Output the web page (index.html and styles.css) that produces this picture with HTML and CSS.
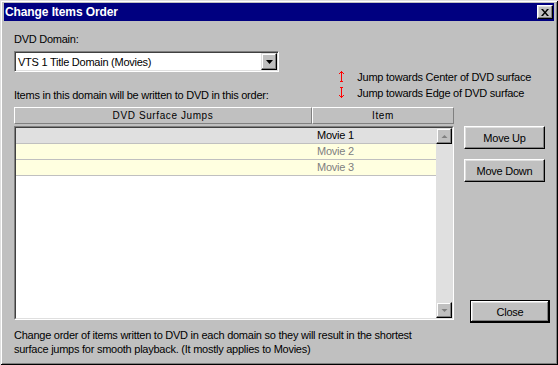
FILE: index.html
```html
<!DOCTYPE html>
<html lang="en">
<head>
  <meta charset="UTF-8">
  <title>Change Items Order</title>
  <link rel="stylesheet" href="styles.css">
</head>
<body>
  <div class="window">
    <div class="titlebar">
      <span class="title">Change Items Order</span>
      <button class="tb-close" aria-label="Close">
        <svg width="8" height="7" viewBox="0 0 8 7"><path d="M0 0h2l2 2.5L6 0h2L5 3.5 8 7H6L4 4.5 2 7H0l3-3.5z" fill="#000"/></svg>
      </button>
    </div>

    <div class="client">
      <div class="top">
        <div class="domain">
          <label class="lbl">DVD Domain:</label>
          <div class="combo">
            <span class="combo-text">VTS 1 Title Domain (Movies)</span>
            <span class="combo-btn">
              <svg width="7" height="4" viewBox="0 0 7 4"><path d="M0 0h7L3.5 4z" fill="#000"/></svg>
            </span>
          </div>
          <p class="hint">Items in this domain will be written to DVD in this order:</p>
        </div>

        <ul class="legend">
          <li>
            <svg class="arrow arrow-up" width="7" height="12" viewBox="0 0 7 12" shape-rendering="crispEdges"><path d="M1 3h1v1H1zM2 2h1v1H2zM3 1h1v10H3zM4 2h1v1H4zM5 3h1v1H5zM2 11h3v1H2z" fill="#ff0000"/></svg>
            <span>Jump towards Center of DVD surface</span>
          </li>
          <li>
            <svg class="arrow" width="7" height="12" viewBox="0 0 7 12" shape-rendering="crispEdges"><path d="M2 0h3v1H2zM3 1h1v10H3zM1 8h1v1H1zM2 9h1v1H2zM4 9h1v1H4zM5 8h1v1H5z" fill="#ff0000"/></svg>
            <span>Jump towards Edge of DVD surface</span>
          </li>
        </ul>
      </div>

      <div class="main">
        <div class="listview">
          <div class="header">
            <div class="col col-jumps">DVD Surface Jumps</div>
            <div class="col col-item">Item</div>
          </div>
          <div class="list">
            <div class="list-inner">
              <div class="rows">
                <div class="row selected"><span class="cell-jump"></span><span class="cell-item">Movie 1</span></div>
                <div class="row"><span class="cell-jump"></span><span class="cell-item">Movie 2</span></div>
                <div class="row"><span class="cell-jump"></span><span class="cell-item">Movie 3</span></div>
              </div>
              <div class="scrollbar">
                <span class="sb-btn">
                  <svg width="7" height="5" viewBox="0 0 7 5"><path d="M3.5 1L6.5 4H0.5z" fill="#808080"/></svg>
                </span>
                <span class="sb-btn">
                  <svg width="7" height="5" viewBox="0 0 7 5"><path d="M0.5 1H6.5L3.5 4z" fill="#808080"/></svg>
                </span>
              </div>
            </div>
          </div>
        </div>

        <div class="actions">
          <button class="btn">Move Up</button>
          <button class="btn">Move Down</button>
          <button class="btn btn-default">Close</button>
        </div>
      </div>

      <p class="note">Change order of items written to DVD in each domain so they will result in the shortest<br>surface jumps for smooth playback. (It mostly applies to Movies)</p>
    </div>
  </div>
</body>
</html>
```

FILE: styles.css
```css
body {
  margin: 0;
  font-family: 'Liberation Sans', Arial, sans-serif;
  font-size: 11px;
  letter-spacing: -0.25px;
  color: #000;
  background: #c0c0c0;
}

.window {
  width: 558px;
  height: 365px;
  box-sizing: border-box;
  padding: 3px 4px;
  background: #c0c0c0;
  box-shadow: inset 1px 1px #dfdfdf, inset -1px -1px #000, inset 2px 2px #fff, inset -2px -2px #808080;
}

/* title bar */
.titlebar {
  height: 18px;
  background: #000080;
  display: flex;
  align-items: center;
  justify-content: space-between;
  padding: 0 1px 0 1px;
}

.title {
  color: #fff;
  font-weight: bold;
  font-size: 12px;
  letter-spacing: -0.1px;
}

.tb-close {
  width: 16px;
  height: 14px;
  padding: 0;
  margin: 0;
  background: #c0c0c0;
  border: 1px solid;
  border-color: #fff #000 #000 #fff;
  box-shadow: inset -1px -1px #808080, inset 1px 1px #dfdfdf;
  display: flex;
  align-items: center;
  justify-content: center;
}

/* client */
.client {
  padding: 12px 4px 0 10px;
}

.top {
  display: flex;
  justify-content: space-between;
}

.domain {
  width: 265px;
}

.lbl {
  display: block;
  line-height: 13px;
}

.combo {
  margin-top: 5px;
  height: 21px;
  box-sizing: border-box;
  background: #fff;
  border: 1px solid;
  border-color: #808080 #fff #fff #808080;
  box-shadow: inset 1px 1px #404040, inset -1px -1px #dfdfdf;
  display: flex;
  align-items: center;
  justify-content: space-between;
  padding: 1px;
}

.combo-text {
  padding-left: 2px;
}

.combo-btn {
  width: 16px;
  height: 17px;
  box-sizing: border-box;
  background: #c0c0c0;
  border: 1px solid;
  border-color: #dfdfdf #000 #000 #dfdfdf;
  box-shadow: inset -1px -1px #808080, inset 1px 1px #fff;
  display: flex;
  align-items: center;
  justify-content: center;
}

.hint {
  margin: 17px 0 0;
  line-height: 13px;
  white-space: nowrap;
}

.legend {
  list-style: none;
  margin: 36px 19px 0 0;
  padding: 0;
}

.legend li {
  display: flex;
  align-items: center;
  height: 16px;
}

.legend .arrow {
  flex: none;
  margin-right: 12px;
}

.legend .arrow-up {
  margin-top: -3px;
}

/* list view */
.main {
  display: flex;
  margin-top: 5px;
}

.listview {
  width: 440px;
}

.header {
  display: flex;
  height: 17px;
}

.col {
  box-sizing: border-box;
  border: 1px solid;
  border-color: #fff #808080 #808080 #fff;
  text-align: center;
  font-size: 10px;
  letter-spacing: 0.6px;
  line-height: 15px;
}

.col-jumps {
  width: 298px;
}

.col-item {
  flex: 1;
}

.list {
  margin-top: 2px;
  height: 194px;
  box-sizing: border-box;
  border: 1px solid;
  border-color: #808080 #fff #fff #808080;
}

.list-inner {
  height: 100%;
  box-sizing: border-box;
  border: 1px solid;
  border-color: #404040 #dfdfdf #dfdfdf #404040;
  background: #fff;
  display: flex;
}

.rows {
  flex: 1;
}

.row {
  display: flex;
  height: 16px;
  box-sizing: border-box;
  border-bottom: 1px solid #c0c0c0;
  background: #ffffe0;
  color: #808080;
  line-height: 15px;
}

.row.selected {
  background: #e0e0e0;
  color: #000;
}

.cell-jump {
  width: 296px;
}

.cell-item {
  padding-left: 5px;
}

.scrollbar {
  width: 16px;
  background: #e0e0e0;
  display: flex;
  flex-direction: column;
  justify-content: space-between;
}

.sb-btn {
  width: 16px;
  height: 16px;
  box-sizing: border-box;
  background: #c0c0c0;
  border: 1px solid;
  border-color: #dfdfdf #000 #000 #dfdfdf;
  box-shadow: inset -1px -1px #808080, inset 1px 1px #fff;
  display: flex;
  align-items: center;
  justify-content: center;
}

/* buttons */
.actions {
  display: flex;
  flex-direction: column;
  margin-left: 10px;
  padding-top: 19px;
}

.btn {
  width: 81px;
  height: 23px;
  padding: 0;
  font-family: inherit;
  font-size: 11px;
  letter-spacing: inherit;
  color: #000;
  background: #c0c0c0;
  border: 1px solid;
  border-color: #fff #000 #000 #fff;
  box-shadow: inset -1px -1px #808080, inset 1px 1px #dfdfdf;
}

.btn + .btn {
  margin-top: 10px;
}

.btn-default {
  width: 80px;
  margin-left: 6px;
  border: 1px solid #000;
  box-shadow: inset -1px -1px #000, inset 1px 1px #fff, inset -2px -2px #808080, inset 2px 2px #dfdfdf;
}

.actions .btn-default {
  margin-top: 118px;
}

.note {
  margin: 5px 0 0;
  line-height: 14px;
}
```
